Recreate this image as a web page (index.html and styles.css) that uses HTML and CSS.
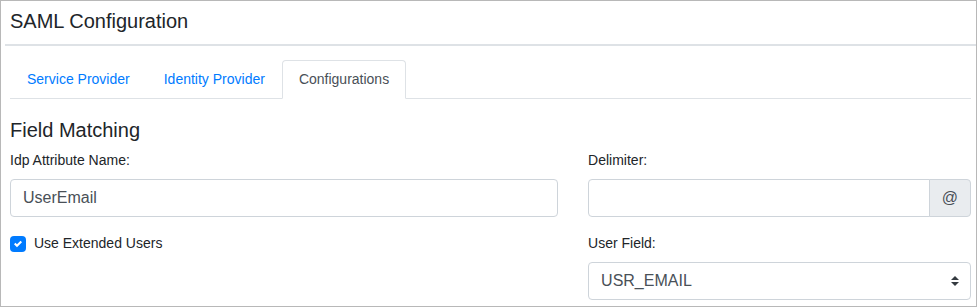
FILE: index.html
```html
<!DOCTYPE html>
<html lang="en">
<head>
    <meta charset="UTF-8">
    <meta name="viewport" content="width=device-width, initial-scale=1.0">
    <title>SAML Configuration</title>
    <link rel="stylesheet" href="styles.css">
</head>
<body>

<!-- SAML panel -->
<div class="panel">
    <div class="panel-header">
        <h2>SAML Configuration</h2>
    </div>

    <div class="panel-body">
        <!-- Tabs -->
        <ul class="nav-tabs">
            <li class="nav-item"><a class="nav-link" href="#">Service Provider</a></li>
            <li class="nav-item"><a class="nav-link" href="#">Identity Provider</a></li>
            <li class="nav-item"><a class="nav-link active" href="#">Configurations</a></li>
        </ul>

        <div class="tab-content">
            <h5>Field Matching</h5>

            <div class="row">
                <div class="col-left">
                    <div class="form-group">
                        <label for="idpAttr">Idp Attribute Name:</label>
                        <input type="text" id="idpAttr" class="form-control" value="UserEmail">
                    </div>
                    <div class="form-group">
                        <label class="check">
                            <span class="check-box">
                                <svg width="8" height="8" viewBox="0 0 8 8"><path fill="#fff" d="M6.564.75l-3.59 3.612-1.538-1.55L0 4.26l2.974 2.99L8 2.193z"/></svg>
                            </span>
                            Use Extended Users
                        </label>
                    </div>
                </div>

                <div class="col-right">
                    <div class="form-group">
                        <label for="delimiter">Delimiter:</label>
                        <div class="input-group">
                            <input type="text" id="delimiter" class="form-control">
                            <span class="input-addon">@</span>
                        </div>
                    </div>
                    <div class="form-group">
                        <label for="userField">User Field:</label>
                        <div class="select-wrap">
                            <select id="userField" class="form-control custom-select">
                                <option>USR_EMAIL</option>
                            </select>
                            <svg class="select-arrow" width="8" height="10" viewBox="0 0 4 5"><path fill="#343a40" d="M2 0L0 2h4zm0 5L0 3h4z"/></svg>
                        </div>
                    </div>
                </div>
            </div>
        </div>
    </div>
</div>

</body>
</html>
```

FILE: styles.css
```css
* {
    box-sizing: border-box;
}
body {
    font-family: 'Liberation Sans', Arial, sans-serif;
    font-size: 14px;
    line-height: 1.5;
    color: #212529;
    background-color: #fff;
    margin: 0;
}
.panel {
    border: 1px solid #b8b8b8;
    height: 307px;
    padding-left: 4px;
    overflow: hidden;
}
.panel-header {
    padding: 8px 5px 11px;
    border-bottom: 2px solid #dee2e6;
}
.panel-header h2 {
    margin: 0;
    font-size: 20px;
    font-weight: normal;
    line-height: 24px;
}
.panel-body {
    padding: 14px 5px 0;
}
.nav-tabs {
    display: flex;
    list-style: none;
    margin: 0;
    padding: 0;
    border-bottom: 1px solid #dee2e6;
}
.nav-item {
    margin-bottom: -1px;
}
.nav-link {
    display: block;
    padding: 8px 16px;
    border: 1px solid transparent;
    border-top-left-radius: 4px;
    border-top-right-radius: 4px;
    color: #007bff;
    text-decoration: none;
}
.nav-link.active {
    color: #495057;
    background-color: #fff;
    border-color: #dee2e6 #dee2e6 #fff;
}
.tab-content {
    padding-top: 19px;
}
h5 {
    margin: 0 0 8px;
    font-size: 20px;
    font-weight: normal;
    line-height: 24px;
}
.row {
    display: flex;
    margin: 0 -15px;
}
.col-left {
    flex: 0 0 58.3333%;
    padding: 0 15px;
}
.col-right {
    flex: 0 0 41.6667%;
    padding: 0 15px;
}
.form-group {
    margin-bottom: 16px;
}
label {
    display: inline-block;
    margin-bottom: 8px;
}
.form-control {
    display: block;
    width: 100%;
    height: 38px;
    padding: 6px 12px;
    font-family: 'Liberation Sans', Arial, sans-serif;
    font-size: 16px;
    line-height: 1.5;
    color: #495057;
    background-color: #fff;
    border: 1px solid #ced4da;
    border-radius: 4px;
}
.input-group {
    display: flex;
}
.input-group .form-control {
    flex: 1 1 auto;
    width: 1%;
    border-top-right-radius: 0;
    border-bottom-right-radius: 0;
}
.input-addon {
    display: flex;
    align-items: center;
    padding: 6px 12px;
    margin-left: -1px;
    font-size: 16px;
    color: #495057;
    background-color: #e9ecef;
    border: 1px solid #ced4da;
    border-radius: 0 4px 4px 0;
}
.check {
    display: flex;
    align-items: flex-start;
    gap: 8px;
    margin-bottom: 0;
}
.check-box {
    display: flex;
    align-items: center;
    justify-content: center;
    width: 16px;
    height: 16px;
    margin-top: 3px;
    background-color: #007bff;
    border-radius: 4px;
}
.select-wrap {
    position: relative;
}
.custom-select {
    -webkit-appearance: none;
    appearance: none;
    padding-right: 28px;
}
.select-arrow {
    position: absolute;
    right: 12px;
    top: 14px;
}
```
